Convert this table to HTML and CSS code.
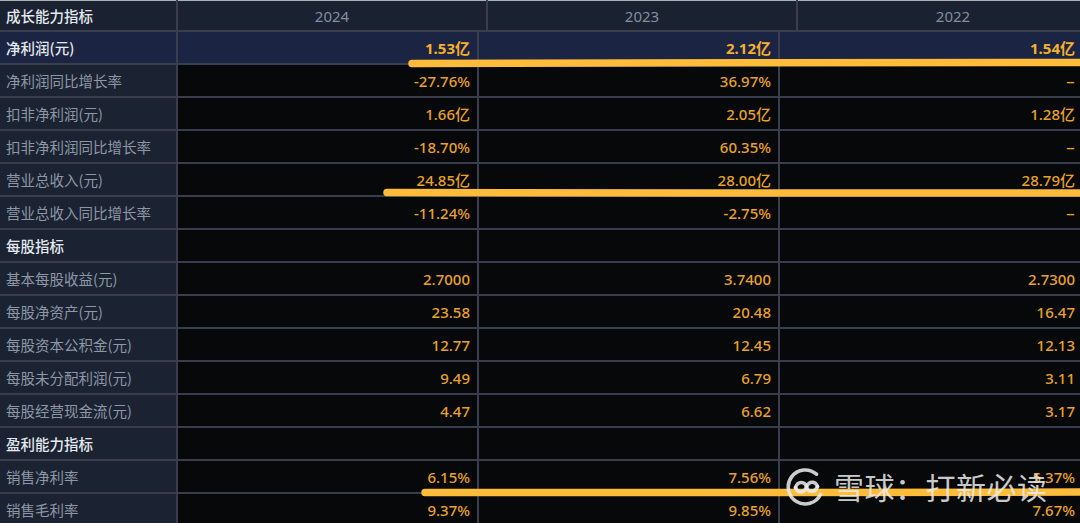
FILE: index.html
```html
<!DOCTYPE html>
<html lang="zh">
<head>
<meta charset="utf-8">
<title>成长能力指标</title>
<link rel="stylesheet" href="styles.css">
</head>
<body>
<div class="sheet">
  <div class="table">
    <div class="row head">
      <div class="cell label strong">成长能力指标</div>
      <div class="cell year">2024</div>
      <div class="cell year">2023</div>
      <div class="cell year">2022</div>
    </div>
    <div class="row hl">
      <div class="cell label strong">净利润(元)</div>
      <div class="cell val bold">1.53亿</div>
      <div class="cell val bold">2.12亿</div>
      <div class="cell val bold">1.54亿</div>
    </div>
    <div class="row">
      <div class="cell label">净利润同比增长率</div>
      <div class="cell val">-27.76%</div>
      <div class="cell val">36.97%</div>
      <div class="cell val nil">--</div>
    </div>
    <div class="row">
      <div class="cell label">扣非净利润(元)</div>
      <div class="cell val">1.66亿</div>
      <div class="cell val">2.05亿</div>
      <div class="cell val">1.28亿</div>
    </div>
    <div class="row">
      <div class="cell label">扣非净利润同比增长率</div>
      <div class="cell val">-18.70%</div>
      <div class="cell val">60.35%</div>
      <div class="cell val nil">--</div>
    </div>
    <div class="row">
      <div class="cell label">营业总收入(元)</div>
      <div class="cell val">24.85亿</div>
      <div class="cell val">28.00亿</div>
      <div class="cell val">28.79亿</div>
    </div>
    <div class="row">
      <div class="cell label">营业总收入同比增长率</div>
      <div class="cell val">-11.24%</div>
      <div class="cell val">-2.75%</div>
      <div class="cell val nil">--</div>
    </div>
    <div class="row">
      <div class="cell label strong">每股指标</div>
      <div class="cell val"></div>
      <div class="cell val"></div>
      <div class="cell val"></div>
    </div>
    <div class="row">
      <div class="cell label">基本每股收益(元)</div>
      <div class="cell val">2.7000</div>
      <div class="cell val">3.7400</div>
      <div class="cell val">2.7300</div>
    </div>
    <div class="row">
      <div class="cell label">每股净资产(元)</div>
      <div class="cell val">23.58</div>
      <div class="cell val">20.48</div>
      <div class="cell val">16.47</div>
    </div>
    <div class="row">
      <div class="cell label">每股资本公积金(元)</div>
      <div class="cell val">12.77</div>
      <div class="cell val">12.45</div>
      <div class="cell val">12.13</div>
    </div>
    <div class="row">
      <div class="cell label">每股未分配利润(元)</div>
      <div class="cell val">9.49</div>
      <div class="cell val">6.79</div>
      <div class="cell val">3.11</div>
    </div>
    <div class="row">
      <div class="cell label">每股经营现金流(元)</div>
      <div class="cell val">4.47</div>
      <div class="cell val">6.62</div>
      <div class="cell val">3.17</div>
    </div>
    <div class="row">
      <div class="cell label strong">盈利能力指标</div>
      <div class="cell val"></div>
      <div class="cell val"></div>
      <div class="cell val"></div>
    </div>
    <div class="row">
      <div class="cell label">销售净利率</div>
      <div class="cell val">6.15%</div>
      <div class="cell val">7.56%</div>
      <div class="cell val">5.37%</div>
    </div>
    <div class="row">
      <div class="cell label">销售毛利率</div>
      <div class="cell val">9.37%</div>
      <div class="cell val">9.85%</div>
      <div class="cell val">7.67%</div>
    </div>
  </div>

  <svg class="marks" width="1080" height="523" viewBox="0 0 1080 523" aria-hidden="true">
    <path d="M412 63.5 C 600 63, 900 62.5, 1090 62.5" />
    <path d="M387 192.5 C 600 193, 900 193, 1090 193" />
    <path d="M425 492.5 C 600 493, 900 492.5, 1090 492" />
  </svg>

  <div class="watermark">
    <svg class="wm-logo" width="40" height="40" viewBox="0 0 40 40" aria-hidden="true">
      <path d="M30.5 8.2 A17 17 0 1 0 34.5 28.5" />
      <path d="M9.5 21.5 C 12 14.5, 19 15.5, 20.5 21 C 22 26.5, 29 27, 31.5 20.5" />
      <path d="M9.5 21.5 C 12 27.5, 18 27.5, 20.5 21 C 23 14.5, 29.5 15, 31.5 20.5" />
    </svg>
    <span class="wm-text">雪球：打新必读</span>
  </div>
</div>
</body>
</html>
```

FILE: styles.css
```css
html, body {
  margin: 0;
  padding: 0;
  overflow: hidden;
  background: #070809;
}

.sheet {
  position: relative;
  width: 1080px;
  height: 523px;
  overflow: hidden;
}

.table {
  display: flex;
  flex-direction: column;
  gap: 2px;
  width: 1108px;
  background: #383e4d;
}

.row {
  display: grid;
  grid-template-columns: 176px 299px 299px 302px;
  gap: 2px;
  height: 31px;
}

.row.head {
  grid-template-columns: 176px 308px 308px 310px;
  height: 30px;
}

.cell {
  display: flex;
  align-items: center;
  min-width: 0;
  background: #070809;
  font-family: "Noto Sans", "Noto Sans CJK SC", sans-serif;
}

.label {
  background: #1b2332;
  padding-left: 6px;
  font-family: "Noto Sans CJK SC", "Noto Sans", sans-serif;
  font-size: 14.5px;
  color: #8e97a6;
  white-space: nowrap;
}

.label.strong {
  color: #e4e9f0;
  font-weight: 500;
}

.head .cell {
  background: #1a2130;
  border-top: 1px solid #aab0b8;
}

.year {
  justify-content: center;
  font-size: 15px;
  color: #838ea0;
}

.val {
  justify-content: flex-end;
  padding-right: 7px;
  font-size: 15px;
  font-weight: 500;
  color: #e8a226;
  white-space: nowrap;
}

.val.nil {
  letter-spacing: -1.5px;
  padding-right: 9px;
}

.val.bold {
  font-weight: 700;
  color: #f5b02c;
}

.hl .cell {
  background: #1b2442;
}

.marks {
  position: absolute;
  left: 0;
  top: 0;
  pointer-events: none;
}

.marks path {
  fill: none;
  stroke: #ffbb3a;
  stroke-width: 7.5;
  stroke-linecap: round;
}

.watermark {
  position: absolute;
  left: 786px;
  top: 466px;
  display: flex;
  align-items: center;
  gap: 8px;
  color: rgba(236, 236, 236, 0.86);
  pointer-events: none;
}

.wm-logo path {
  fill: none;
  stroke: rgba(236, 236, 236, 0.86);
  stroke-width: 3.6;
  stroke-linecap: round;
}

.wm-text {
  font-family: "Noto Sans CJK SC", sans-serif;
  font-size: 30px;
  line-height: 40px;
  letter-spacing: 0.5px;
}
```
